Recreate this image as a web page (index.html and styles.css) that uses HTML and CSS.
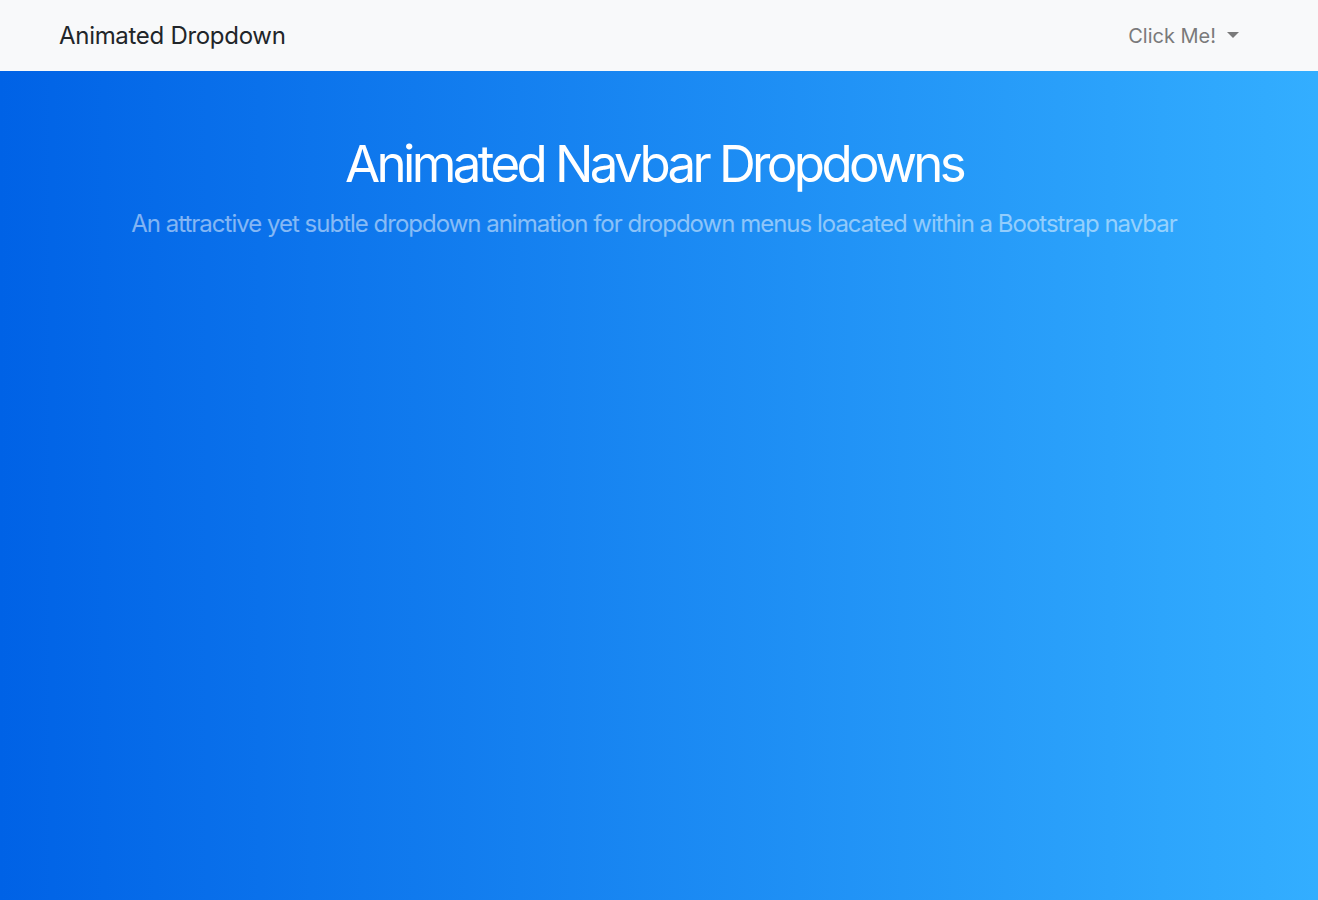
FILE: index.html
```html
<!DOCTYPE html>
<html lang="en">
<head>
<meta charset="utf-8">
<title>Animated Dropdown</title>
<link rel="stylesheet" href="styles.css">
</head>
<body>
<nav class="navbar">
  <a class="brand" href="#">Animated Dropdown</a>
  <a class="toggle" href="#">Click Me!<span class="caret"></span></a>
</nav>
<header class="hero">
  <h1 class="title">Animated Navbar Dropdowns</h1>
  <p class="lead">An attractive yet subtle dropdown animation for dropdown menus loacated within a Bootstrap navbar</p>
</header>
</body>
</html>
```
FILE: styles.css
```css
html, body {
  margin: 0;
  height: 100%;
}
body {
  font-family: Inter, "Liberation Sans", sans-serif;
  display: flex;
  flex-direction: column;
}
.navbar {
  height: 71px;
  box-sizing: border-box;
  background: #f8f9fa;
  display: flex;
  align-items: center;
  justify-content: space-between;
  padding: 0 79px 0 59px;
  flex-shrink: 0;
}
.brand {
  color: #212529;
  text-decoration: none;
  font-size: 24px;
  letter-spacing: -0.3px;
}
.toggle {
  color: #7a7a7a;
  text-decoration: none;
  font-size: 20px;
  display: flex;
  align-items: center;
}
.caret {
  display: inline-block;
  margin-left: 11px;
  width: 0;
  height: 0;
  border-left: 6px solid transparent;
  border-right: 6px solid transparent;
  border-top: 6px solid #7a7a7a;
  margin-top: -2px;
}
.hero {
  flex: 1;
  background: linear-gradient(to right, #0062e6, #33aeff);
  text-align: center;
  padding: 62px 10px 0 0;
}
.title {
  margin: 0;
  color: #fff;
  font-weight: 400;
  font-size: 51px;
  letter-spacing: -3.6px;
  line-height: 1.2;
}
.lead {
  margin: 12px 0 0;
  color: rgba(255, 255, 255, 0.5);
  font-size: 24px;
  letter-spacing: -1px;
  line-height: 1.5;
}
```
